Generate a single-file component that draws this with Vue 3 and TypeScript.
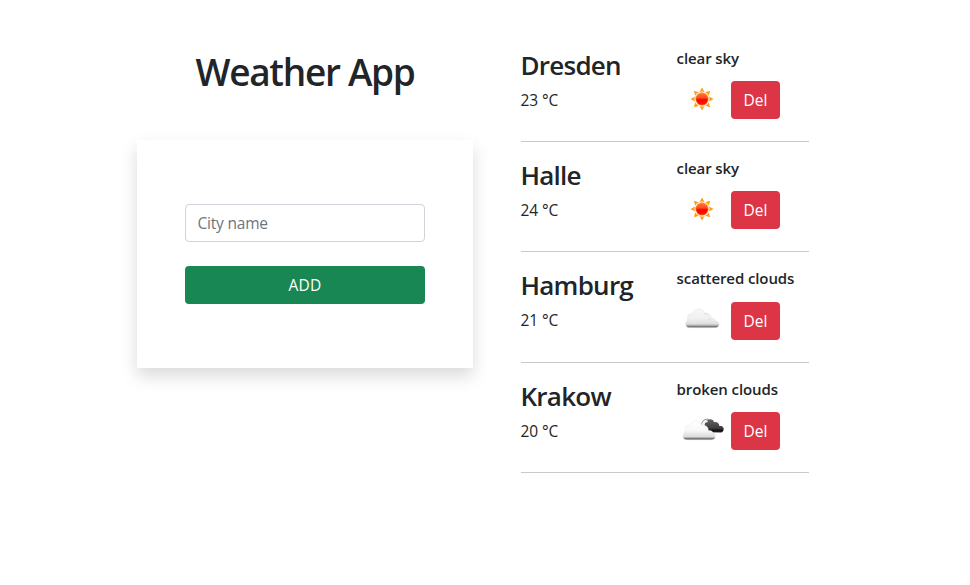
<script setup lang="ts">
import { ref } from 'vue'

type Sky = 'sun' | 'cloud' | 'broken'

interface City {
  name: string
  temp: number
  description: string
  sky: Sky
}

const cityName = ref('')
const cities = ref<City[]>([
  { name: 'Dresden', temp: 23, description: 'clear sky', sky: 'sun' },
  { name: 'Halle', temp: 24, description: 'clear sky', sky: 'sun' },
  { name: 'Hamburg', temp: 21, description: 'scattered clouds', sky: 'cloud' },
  { name: 'Krakow', temp: 20, description: 'broken clouds', sky: 'broken' },
])

function addCity(): void {
  const name = cityName.value.trim()
  if (!name) return
  cities.value.push({ name, temp: 20, description: 'clear sky', sky: 'sun' })
  cityName.value = ''
}

function removeCity(index: number): void {
  cities.value.splice(index, 1)
}

const rays = [0, 45, 90, 135, 180, 225, 270, 315]
</script>

<template>
  <main class="page">
    <section class="search">
      <h1 class="title">Weather App</h1>
      <form class="card" @submit.prevent="addCity">
        <input v-model="cityName" class="field" type="text" placeholder="City name" />
        <button class="btn add" type="submit">ADD</button>
      </form>
    </section>

    <section class="cities">
      <article v-for="(city, i) in cities" :key="city.name" class="city">
        <div class="place">
          <h3 class="name">{{ city.name }}</h3>
          <p class="temp">{{ city.temp }} °C</p>
        </div>
        <div class="weather">
          <h6 class="description">{{ city.description }}</h6>
          <div class="actions">
            <svg v-if="city.sky === 'sun'" class="icon" viewBox="0 0 50 50">
              <defs>
                <linearGradient :id="'sun' + i" x1="0" y1="0" x2="0" y2="1">
                  <stop offset="0" stop-color="#ff7a3c" />
                  <stop offset="0.42" stop-color="#ff4a1c" />
                  <stop offset="0.55" stop-color="#fb0500" />
                  <stop offset="1" stop-color="#ff1500" />
                </linearGradient>
              </defs>
              <path
                v-for="angle in rays"
                :key="angle"
                d="M25 13.4 L27.5 18 Q25 16.9 22.5 18 Z"
                :transform="`rotate(${angle} 25 25)`"
                fill="#ff9d13"
              />
              <circle cx="25" cy="25" r="6.3" :fill="`url(#sun${i})`" stroke="#ffa52b" stroke-width="0.7" />
            </svg>

            <svg v-else-if="city.sky === 'cloud'" class="icon" viewBox="0 0 50 50">
              <defs>
                <linearGradient :id="'cloud' + i" x1="0" y1="0" x2="0" y2="1">
                  <stop offset="0" stop-color="#f8f8f8" />
                  <stop offset="0.5" stop-color="#f0f0f0" />
                  <stop offset="0.78" stop-color="#e0e0e0" />
                  <stop offset="0.88" stop-color="#b4b4b4" />
                  <stop offset="0.91" stop-color="#777" />
                  <stop offset="1" stop-color="#858585" />
                </linearGradient>
              </defs>
              <path
                d="M12 33 C9.5 33 8.3 31 8.3 29 C8.3 27 9.4 25.8 10.5 25.3 C8.8 21 12 18 15.4 19 C16.5 15.6 19 14.2 21.3 14.2 C24.2 14.2 26.5 16 27 18.6 C30 17.5 34 20 33.8 23.6 C36.6 23.4 37.8 25.1 37.8 26.2 C40.3 26 41.6 27.8 41.6 29.6 C41.6 31.7 40.2 33 38 33 Z"
                :fill="`url(#cloud${i})`"
                stroke="#dcdcdc"
                stroke-width="0.4"
                transform="translate(0.4 -0.3)"
              />
              <path d="M27 18.6 C29.5 18.8 30.7 19.8 31.3 21.5 M33.8 23.6 C32.2 23.8 31.2 24.5 30.7 25.6" fill="none" stroke="#d4d4d4" stroke-width="0.6" />
            </svg>

            <svg v-else class="icon" viewBox="0 0 50 50">
              <defs>
                <linearGradient :id="'dark' + i" x1="0" y1="0" x2="0" y2="1">
                  <stop offset="0" stop-color="#636363" />
                  <stop offset="0.65" stop-color="#404040" />
                  <stop offset="0.85" stop-color="#101010" />
                  <stop offset="1" stop-color="#2b2b2b" />
                </linearGradient>
                <linearGradient :id="'light' + i" x1="0" y1="0" x2="0" y2="1">
                  <stop offset="0" stop-color="#ffffff" />
                  <stop offset="0.5" stop-color="#f8f8f8" />
                  <stop offset="0.82" stop-color="#dddddd" />
                  <stop offset="0.88" stop-color="#b0b0b0" />
                  <stop offset="0.91" stop-color="#757575" />
                  <stop offset="1" stop-color="#929292" />
                </linearGradient>
              </defs>
              <g transform="translate(0.7 -0.5)">
                <path
                  d="M28 27.8 C25.5 22 27 15.8 30 15.6 C32 13.8 36 14.8 36.4 17.7 C39.7 17.1 41.7 19.1 41.4 21.4 C44.5 21.1 46 22.7 46 24.5 C46 27 44.3 28.1 42.3 28.1 Z"
                  :fill="`url(#dark${i})`"
                />
                <path d="M23.6 20.5 C24.2 16.3 27.4 13.8 31.8 15" fill="none" stroke="#8a8a8a" stroke-width="1" />
                <path d="M25.6 22 C25.6 18.6 27.4 16.5 30 17" fill="none" stroke="#f4f4f4" stroke-width="1.6" />
                <path
                  d="M9 35.4 C6.2 35.4 5.2 33.2 5.2 31.2 C5.2 29 6.4 27.8 7.6 27.2 C5.8 23 9.2 20 12.3 20.9 C13.4 17.8 15.7 16.5 18.2 16.5 C21.3 16.5 23.7 18.5 24.1 21.3 C27.5 20 31 22.3 30.6 26 C33.4 25.6 35.1 26.7 35 28.3 C37.1 28.7 37.7 30 37.7 31.8 C37.7 34 36.2 35.4 34 35.4 Z"
                  :fill="`url(#light${i})`"
                  stroke="#e2e2e2"
                  stroke-width="0.4"
                />
              </g>
            </svg>
            <button class="btn del" type="button" @click="removeCity(i)">Del</button>
          </div>
        </div>
      </article>
    </section>
  </main>
</template>

<style>
body {
  margin: 0;
  background: #fff;
}
</style>

<style scoped>
* {
  box-sizing: border-box;
}

.page {
  display: flex;
  gap: 48px;
  min-height: 585px;
  padding: 48px 161px 0 137px;
  color: #212529;
  font-family: 'Segoe UI', 'Open Sans', 'Noto Sans', sans-serif;
  font-size: 15.5px;
  line-height: 24px;
}

h1,
h3,
h6,
p {
  margin: 0;
}

.search {
  width: 336px;
}

.title {
  font-size: 37px;
  font-weight: 600;
  line-height: 48px;
  text-align: center;
  letter-spacing: -1.3px;
}

.card {
  display: flex;
  flex-direction: column;
  gap: 24px;
  height: 228px;
  margin-top: 44px;
  padding: 64px 48px;
  background: #fff;
  box-shadow: 0 8px 16px rgba(0, 0, 0, 0.15);
}

.field {
  width: 100%;
  height: 38px;
  padding: 6px 12px 6px 11.5px;
  border: 1px solid #ced4da;
  border-radius: 4px;
  outline: 0;
  background: #fff;
  color: #212529;
  font: inherit;
  letter-spacing: -0.2px;
}

.field::placeholder {
  color: #6c757d;
  opacity: 1;
}

.btn {
  height: 38px;
  padding: 0;
  border: 0;
  border-radius: 4px;
  color: #fff;
  font: inherit;
  text-align: center;
}

.add {
  background: #198754;
  letter-spacing: 0.2px;
}

.del {
  width: 49px;
  background: #dc3545;
}

.cities {
  width: 288px;
}

.city {
  display: flex;
  height: 94.2px;
  margin-bottom: 16px;
  border-bottom: 1px solid #c8c9ca;
}

.place {
  width: 156px;
}

.name {
  margin-left: -0.5px;
  font-size: 26px;
  font-weight: 600;
  line-height: 34px;
  letter-spacing: -0.75px;
}

.temp {
  margin-top: 6px;
  margin-left: -0.5px;
  letter-spacing: -0.1px;
}

.description {
  margin-left: -0.4px;
  font-size: 15px;
  font-weight: 600;
  line-height: 20px;
  letter-spacing: -0.1px;
  white-space: nowrap;
}

.actions {
  display: flex;
  align-items: flex-start;
  gap: 4px;
  padding-top: 13.2px;
}

.icon {
  width: 50px;
  height: 50px;
  margin-top: -7px;
}
</style>
